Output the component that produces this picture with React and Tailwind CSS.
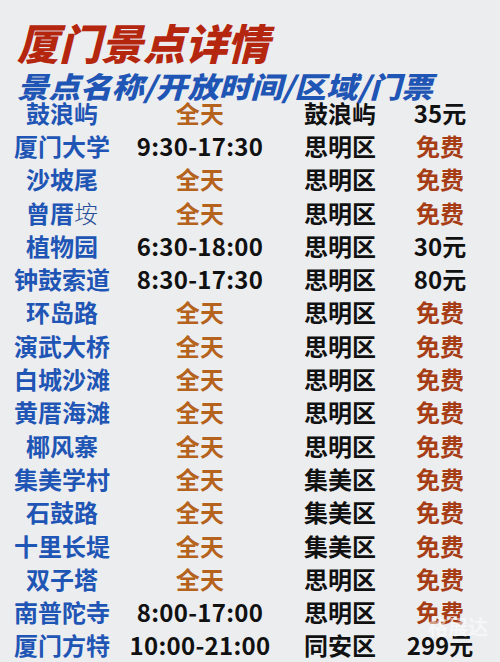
const rows = [
  ['鼓浪屿', '全天', '鼓浪屿', '35元'],
  ['厦门大学', '9:30-17:30', '思明区', '免费'],
  ['沙坡尾', '全天', '思明区', '免费'],
  ['曾厝垵', '全天', '思明区', '免费'],
  ['植物园', '6:30-18:00', '思明区', '30元'],
  ['钟鼓索道', '8:30-17:30', '思明区', '80元'],
  ['环岛路', '全天', '思明区', '免费'],
  ['演武大桥', '全天', '思明区', '免费'],
  ['白城沙滩', '全天', '思明区', '免费'],
  ['黄厝海滩', '全天', '思明区', '免费'],
  ['椰风寨', '全天', '思明区', '免费'],
  ['集美学村', '全天', '集美区', '免费'],
  ['石鼓路', '全天', '集美区', '免费'],
  ['十里长堤', '全天', '集美区', '免费'],
  ['双子塔', '全天', '思明区', '免费'],
  ['南普陀寺', '8:00-17:00', '思明区', '免费'],
  ['厦门方特', '10:00-21:00', '同安区', '299元'],
];

function Name({ text }) {
  if (text === '曾厝垵') {
    return (
      <>
        曾厝<span className="font-light text-[#2a4f9a]">垵</span>
      </>
    );
  }
  return text;
}

export default function App() {
  return (
    <div className="w-[500px] h-[662px] overflow-hidden bg-[#ecedef] font-['Noto_Sans_CJK_SC',sans-serif] relative">
      <h1 className="pl-[17px] pt-[20px] text-[42px] leading-[44px] font-black italic text-[#b5260f]">
        厦门景点详情
      </h1>
      <h2 className="ml-[17px] mt-[8px] text-[29px] leading-[26px] font-black italic text-[#1f55b4] whitespace-nowrap origin-left scale-x-[1.09]">
        景点名称/开放时间/区域/门票
      </h2>
      <div className="mt-[-2px]">
        {rows.map(([name, time, area, price]) => (
          <div key={name} className="grid grid-cols-[124px_152px_128px_72px] h-[33.3px] items-center text-[24px] leading-none font-bold">
            <div className="text-center text-[#1f55b4] whitespace-nowrap">
              <Name text={name} />
            </div>
            <div className={`text-center whitespace-nowrap tracking-[0.3px] ${time === '全天' ? 'text-[#b5631c]' : 'text-[#111]'}`}>
              {time}
            </div>
            <div className="text-center text-[#111] whitespace-nowrap">{area}</div>
            <div className={`text-center whitespace-nowrap ${price === '免费' ? 'text-[#a63d15]' : 'text-[#111]'}`}>
              {price}
            </div>
          </div>
        ))}
      </div>
      <div className="absolute right-[12px] bottom-[20px] text-[20px] font-bold text-white/50">格展达</div>
    </div>
  );
}
